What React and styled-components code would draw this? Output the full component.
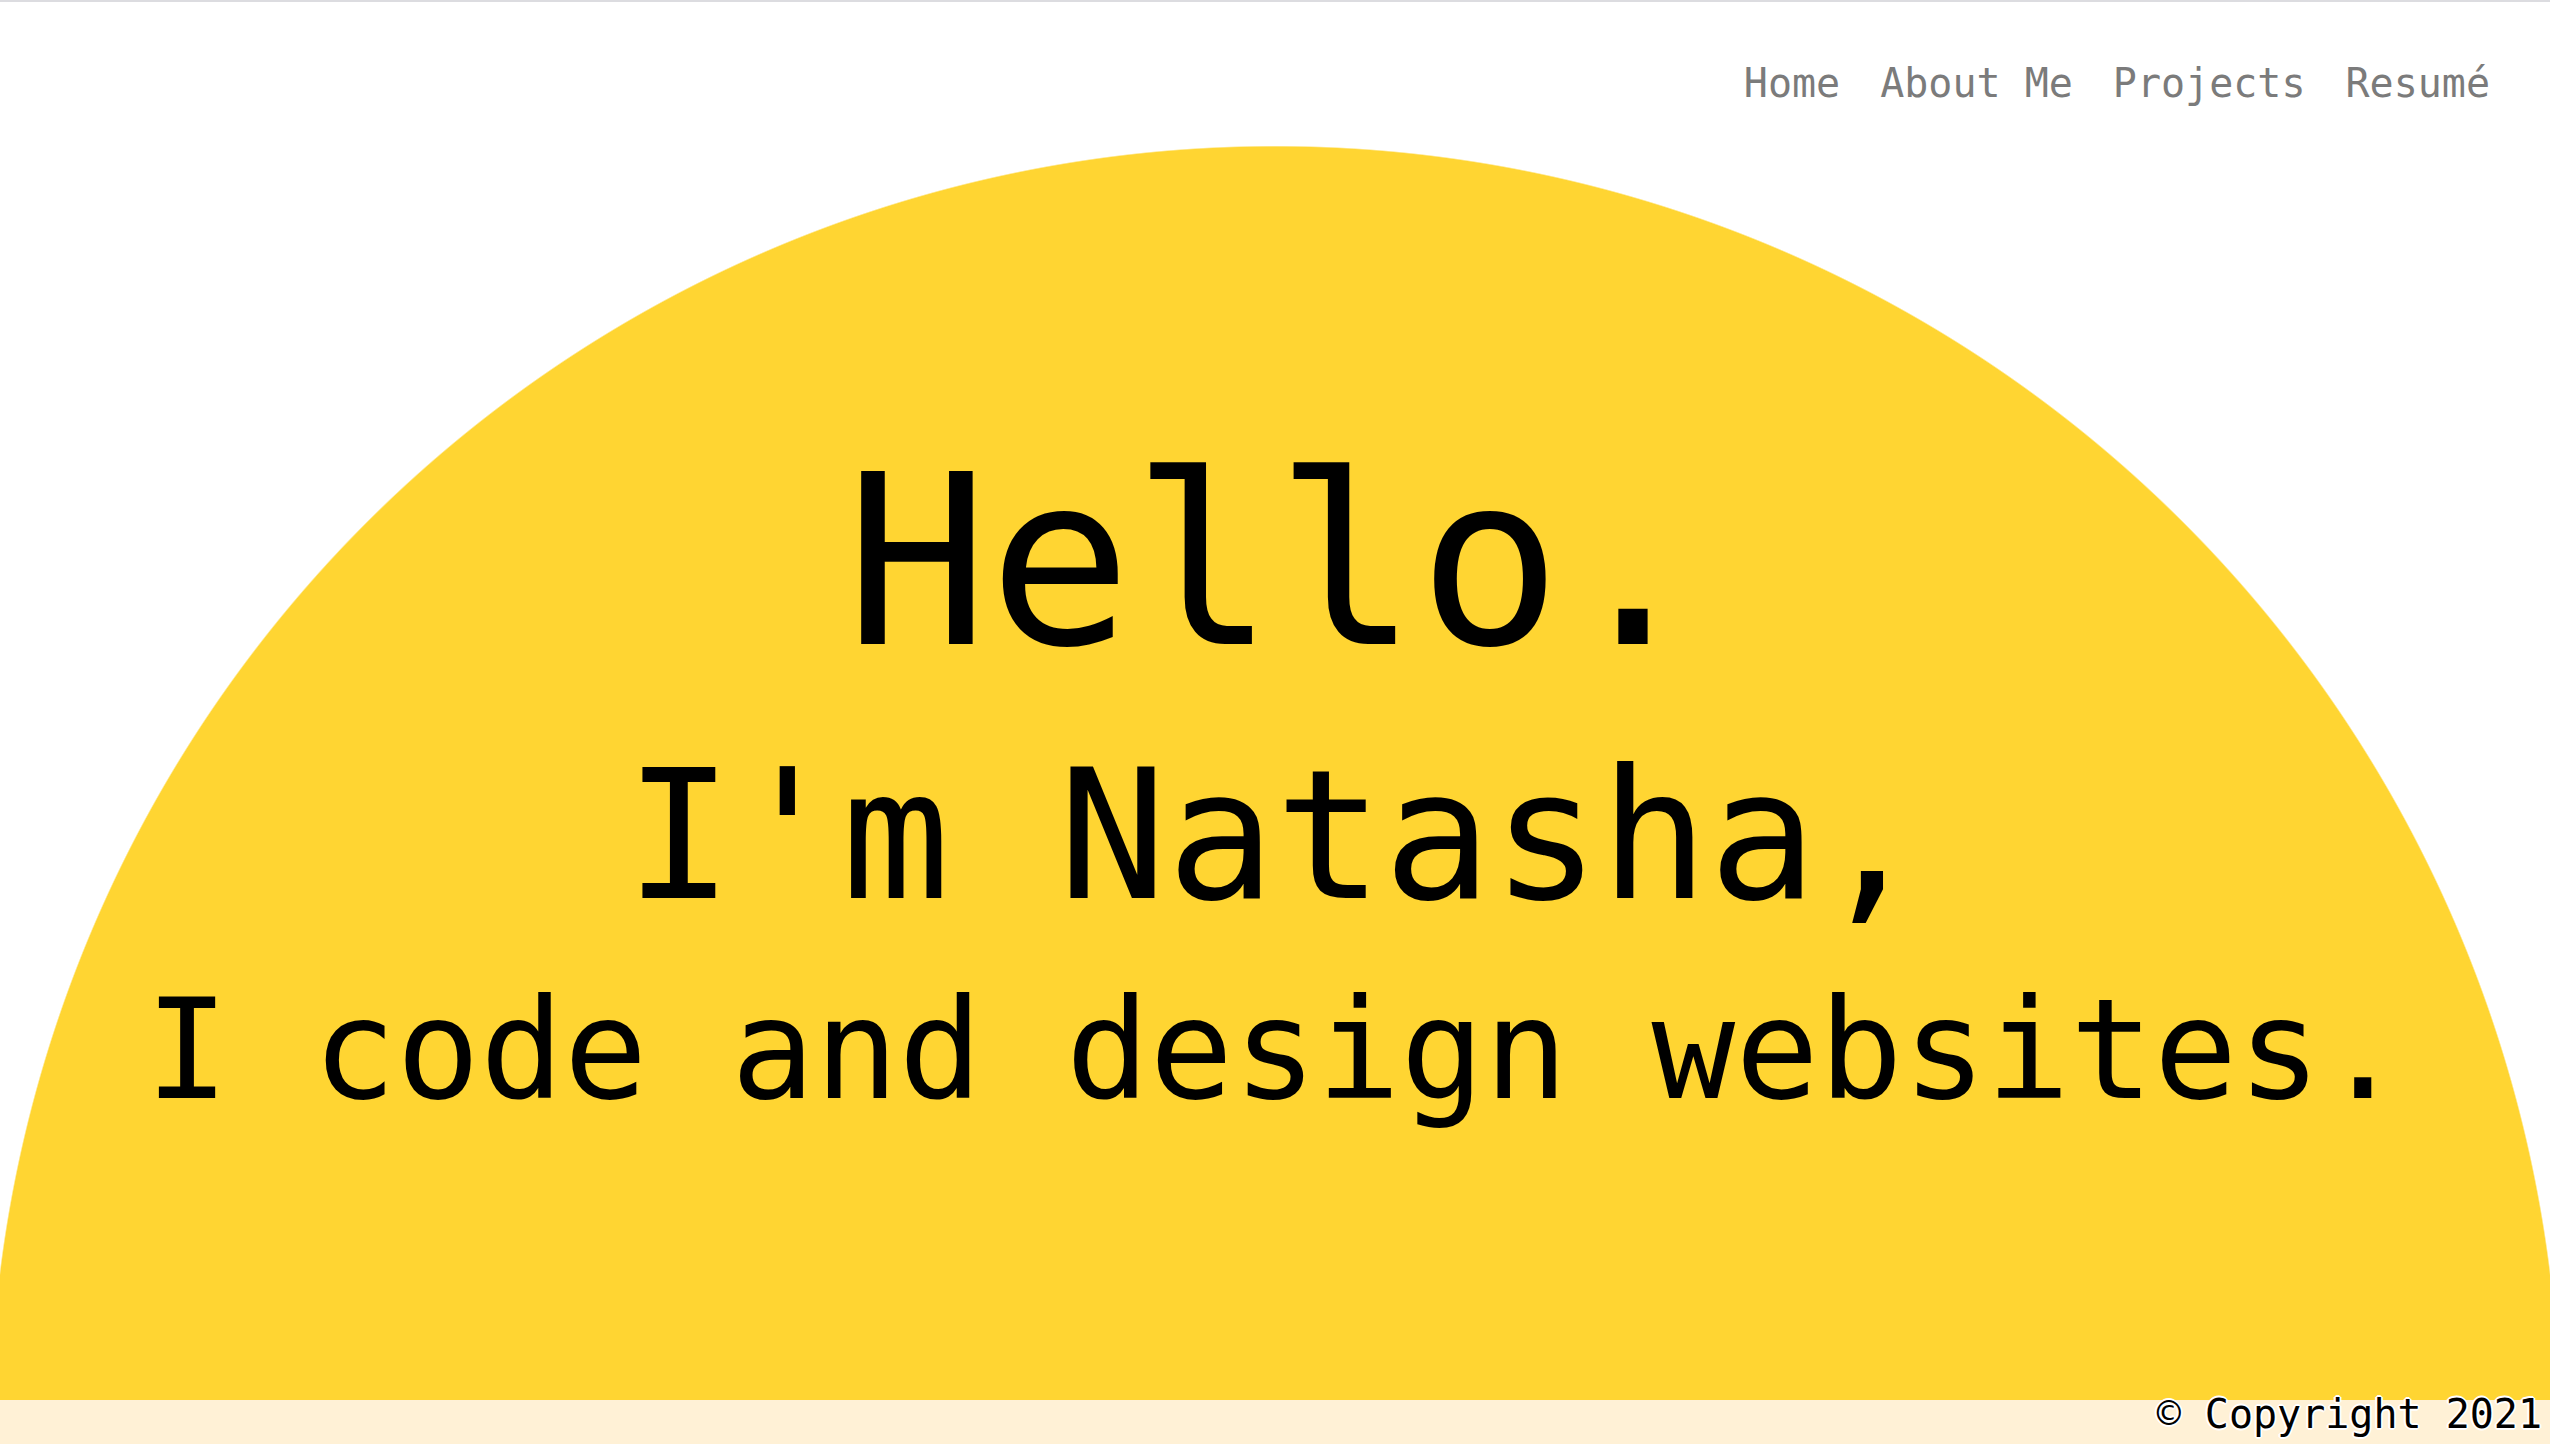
import React from 'react'
import styled, { createGlobalStyle } from 'styled-components'

const GlobalStyle = createGlobalStyle`
    html, body {
        margin:0;
        padding:0;
        background:#ffffff;
    }
    body{
        font-family:"DejaVu Sans Mono","Liberation Mono",monospace;
    }
`;

const Page = styled.div`
    display:flex;
    flex-direction:column;
    min-height:100vh;
    box-sizing:border-box;
    border-top:2px solid #dcdce0;
    overflow:hidden;
`;

const Header = styled.header`
    height:144px;
    box-sizing:border-box;
    padding:58px 60px 0 0;
    display:flex;
    justify-content:flex-end;
    align-items:flex-start;
`;

const NavList = styled.nav`
    display:flex;
    gap:40px;
`;

const NavLink = styled.a`
    font-size:40px;
    color:#7b7b7b;
    text-decoration:none;
    cursor:pointer;
    &:hover{
        color:#000;
    }
`;

const Hero = styled.main`
    flex:1;
    display:flex;
    flex-direction:column;
    align-items:center;
    padding-top:297px;
    background:radial-gradient(circle 1285px at 50% 1285px, #ffd532 1284px, transparent 1285.5px);
    color:#000;
    text-align:center;
`;

const Line = styled.h1`
    margin:${({gap})=>gap || 0}px 0 0;
    font-size:${({size})=>size}px;
    line-height:1;
    font-weight:400;
    white-space:nowrap;
`;

const Footer = styled.footer`
    height:44px;
    background:#fff1d6;
    display:flex;
    justify-content:flex-end;
    align-items:flex-start;
    padding-right:8px;
`;

const Copyright = styled.p`
    margin:0;
    font-size:40px;
    line-height:28px;
    color:#000;
    text-shadow:
        -2px 0 0 #fff,
        2px 0 0 #fff,
        0 -2px 0 #fff,
        0 2px 0 #fff,
        -1px -1px 0 #fff,
        1px 1px 0 #fff,
        -1px 1px 0 #fff,
        1px -1px 0 #fff;
`;

const links = ["Home","About Me","Projects","Resumé"]

const App = () => {
    return (
        <>
            <GlobalStyle/>
            <Page>
                <Header>
                    <NavList>
                        {
                            links.map((l,i)=>(
                                <NavLink key={`nav-${i}`}>{l}</NavLink>
                            ))
                        }
                    </NavList>
                </Header>
                <Hero>
                    <Line size={238}>Hello.</Line>
                    <Line as="h2" size={180} gap={65}>I'm Natasha,</Line>
                    <Line as="h3" size={139} gap={55}>I code and design websites.</Line>
                </Hero>
                <Footer>
                    <Copyright>© Copyright 2021</Copyright>
                </Footer>
            </Page>
        </>
    )
}

export default App
